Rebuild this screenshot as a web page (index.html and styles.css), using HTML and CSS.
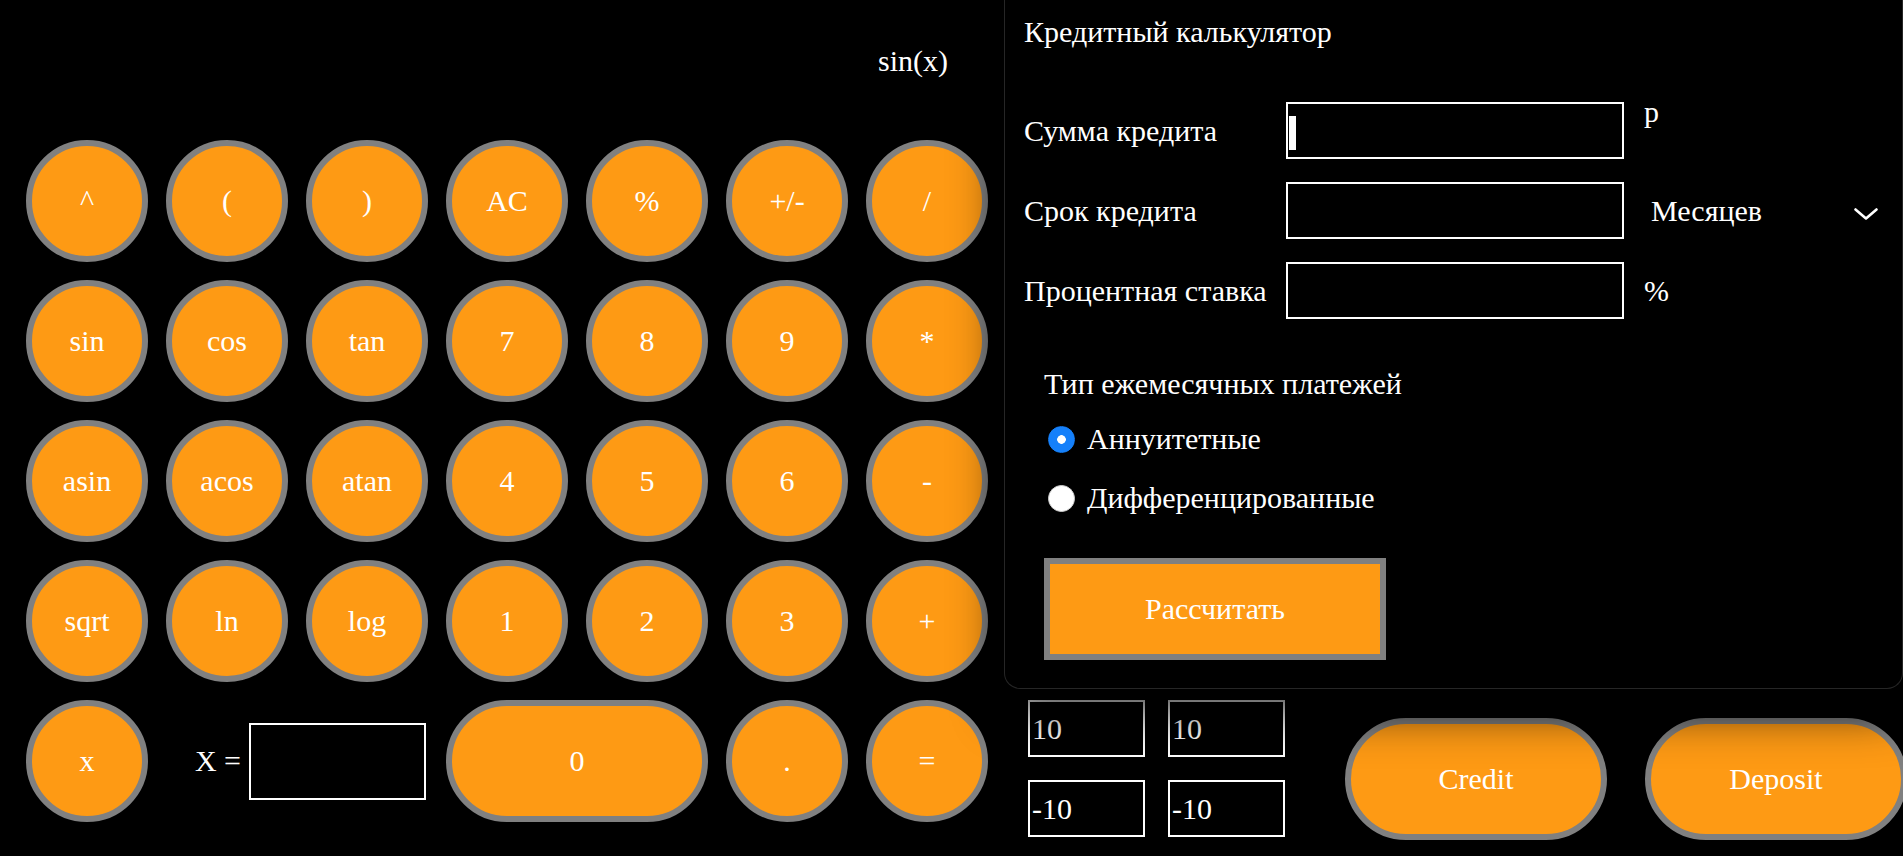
FILE: index.html
```html
<!DOCTYPE html>
<html lang="ru">
<head>
  <meta charset="UTF-8">
  <meta name="viewport" content="width=device-width, initial-scale=1">
  <title>Калькулятор</title>
  <link rel="stylesheet" href="styles.css">
</head>
<body>

  <div class="page">
    <div class="calc">
      <div class="screen">sin(x)</div>

      <div class="keys">
        <button class="key">^</button>
        <button class="key">(</button>
        <button class="key">)</button>
        <button class="key">AC</button>
        <button class="key">%</button>
        <button class="key">+/-</button>
        <button class="key">/</button>

        <button class="key">sin</button>
        <button class="key">cos</button>
        <button class="key">tan</button>
        <button class="key">7</button>
        <button class="key">8</button>
        <button class="key">9</button>
        <button class="key">*</button>

        <button class="key">asin</button>
        <button class="key">acos</button>
        <button class="key">atan</button>
        <button class="key">4</button>
        <button class="key">5</button>
        <button class="key">6</button>
        <button class="key">-</button>

        <button class="key">sqrt</button>
        <button class="key">ln</button>
        <button class="key">log</button>
        <button class="key">1</button>
        <button class="key">2</button>
        <button class="key">3</button>
        <button class="key">+</button>

        <button class="key">x</button>
        <div class="x-field">
          <label for="xval">X =</label>
          <input id="xval" class="x-input" type="text">
        </div>
        <button class="key key-wide">0</button>
        <button class="key">.</button>
        <button class="key">=</button>
      </div>
    </div>

    <div class="side">
      <div class="credit">
        <h2 class="credit-title">Кредитный калькулятор</h2>

        <div class="field field-first">
          <label for="sum">Сумма кредита</label>
          <input id="sum" class="field-input caret" type="text">
          <span class="unit unit-top">р</span>
        </div>

        <div class="field">
          <label for="term">Срок кредита</label>
          <input id="term" class="field-input" type="text">
          <div class="select-wrap">
            <select class="term" name="period">
              <option value="month">Месяцев</option>
              <option value="year">Лет</option>
            </select>
            <svg class="chevron" viewBox="0 0 24 12" width="24" height="12">
              <polyline points="1.5,1.5 12,10.5 22.5,1.5" fill="none" stroke="#fff" stroke-width="2.6" stroke-linecap="round" stroke-linejoin="round"/>
            </svg>
          </div>
        </div>

        <div class="field">
          <label for="rate">Процентная ставка</label>
          <input id="rate" class="field-input" type="text">
          <span class="unit">%</span>
        </div>

        <div class="pay-type">
          <div class="pay-title">Тип ежемесячных платежей</div>
          <label class="radio"><input type="radio" name="type" checked>Аннуитетные</label>
          <label class="radio"><input type="radio" name="type">Дифференцированные</label>
        </div>

        <button class="calc-btn">Рассчитать</button>
      </div>

      <div class="extras">
        <div class="bounds">
          <input class="bound" type="text" value="10">
          <input class="bound" type="text" value="10">
          <input class="bound" type="text" value="-10">
          <input class="bound" type="text" value="-10">
        </div>
        <button class="pill pill-credit">Credit</button>
        <button class="pill">Deposit</button>
      </div>
    </div>
  </div>

</body>
</html>
```

FILE: styles.css
```css
html, body {
  margin: 0;
  padding: 0;
  height: 100%;
  overflow: hidden;
  background-color: #000;
}
body {
  font-family: "Liberation Serif", "Times New Roman", serif;
  font-size: 30px;
  color: #fff;
}
.page {
  display: flex;
  height: 856px;
}

/* calculator */
.calc {
  width: 1004px;
  flex-shrink: 0;
  padding-left: 26px;
  box-sizing: border-box;
}
.screen {
  width: 962px;
  height: 140px;
  box-sizing: border-box;
  padding: 44px 40px 0 0;
  text-align: right;
}
.keys {
  display: grid;
  grid-template-columns: repeat(7, 122px);
  grid-auto-rows: 122px;
  gap: 18px;
}
.key {
  box-sizing: border-box;
  padding: 0;
  border: 6px solid #808080;
  border-radius: 61px;
  background-color: #fe9a14;
  color: #fff;
  font-family: inherit;
  font-size: 30px;
  cursor: pointer;
}
.key-wide {
  grid-column: span 2;
}
.x-field {
  grid-column: span 2;
  display: flex;
  align-items: center;
  justify-content: flex-end;
  gap: 8px;
  padding-right: 2px;
}
.x-input {
  width: 177px;
  height: 77px;
  box-sizing: border-box;
  border: 2px solid #fff;
  background: #000;
  color: #fff;
  font: inherit;
  outline: none;
}

/* credit panel */
.side {
  flex: 1;
  min-width: 0;
}
.credit {
  position: relative;
  z-index: 1;
  background: #000;
  border: 1px solid #262626;
  border-top: none;
  border-radius: 0 0 16px 16px;
  padding: 15px 19px 28px;
  box-shadow: 0 20px 50px rgba(0, 0, 0, 0.85);
}
.credit-title {
  margin: 0;
  font-size: 30px;
  font-weight: normal;
}
.field {
  display: flex;
  align-items: center;
  height: 57px;
  margin-top: 23px;
}
.field-first {
  margin-top: 53px;
}
.field label {
  flex: 0 0 262px;
}
.field-input {
  width: 338px;
  height: 57px;
  flex-shrink: 0;
  box-sizing: border-box;
  padding: 1px 2px;
  border: 2px solid #fff;
  background: #000;
  color: #fff;
  font: inherit;
  outline: none;
}
.caret {
  background: #000 linear-gradient(#fff, #fff) no-repeat 1px 12px / 7px 34px;
}
.unit {
  margin-left: 20px;
}
.unit-top {
  align-self: flex-start;
  margin-top: -7px;
}
.select-wrap {
  flex: 1;
  display: flex;
  align-items: center;
  margin-left: 20px;
}
.term {
  flex: 1;
  -webkit-appearance: none;
  appearance: none;
  background: transparent;
  border: none;
  color: #fff;
  font: inherit;
  padding: 0 0 0 7px;
  outline: none;
}
.term option {
  color: #000;
}
.chevron {
  flex-shrink: 0;
  margin: 6px 5px 0 0;
}
.pay-type {
  padding-left: 20px;
  margin-top: 48px;
}
.radio {
  display: flex;
  align-items: center;
  gap: 12px;
  margin-top: 21px;
}
.radio + .radio {
  margin-top: 25px;
}
.radio input {
  -webkit-appearance: none;
  appearance: none;
  width: 27px;
  height: 27px;
  margin: 0 0 0 4px;
  box-sizing: border-box;
  border: 1px solid #cfcfcf;
  border-radius: 50%;
  background: #fff;
}
.radio input:checked {
  border-color: #1580fa;
  background: radial-gradient(circle, #fff 0 4px, #1580fa 4.6px);
}
.calc-btn {
  display: block;
  width: 342px;
  height: 102px;
  margin: 43px 0 0 20px;
  padding: 0;
  border: 6px solid #808080;
  border-radius: 0;
  background-color: #fe9a14;
  color: #fff;
  font: inherit;
  cursor: pointer;
}

/* bottom row */
.extras {
  display: flex;
  align-items: flex-start;
  padding-left: 24px;
  margin-top: 11px;
}
.bounds {
  display: grid;
  grid-template-columns: 117px 117px;
  gap: 23px;
  flex-shrink: 0;
}
.bound {
  width: 117px;
  height: 57px;
  box-sizing: border-box;
  padding: 1px 2px;
  border: 2px solid #fff;
  background: #000;
  color: #fff;
  font: inherit;
  outline: none;
}
.pill {
  flex-shrink: 0;
  width: 262px;
  height: 122px;
  margin: 18px 0 0 38px;
  padding: 0;
  border: 6px solid #808080;
  border-radius: 61px;
  background-color: #fe9a14;
  color: #fff;
  font: inherit;
  cursor: pointer;
}
.pill-credit {
  margin-left: 60px;
}
```
